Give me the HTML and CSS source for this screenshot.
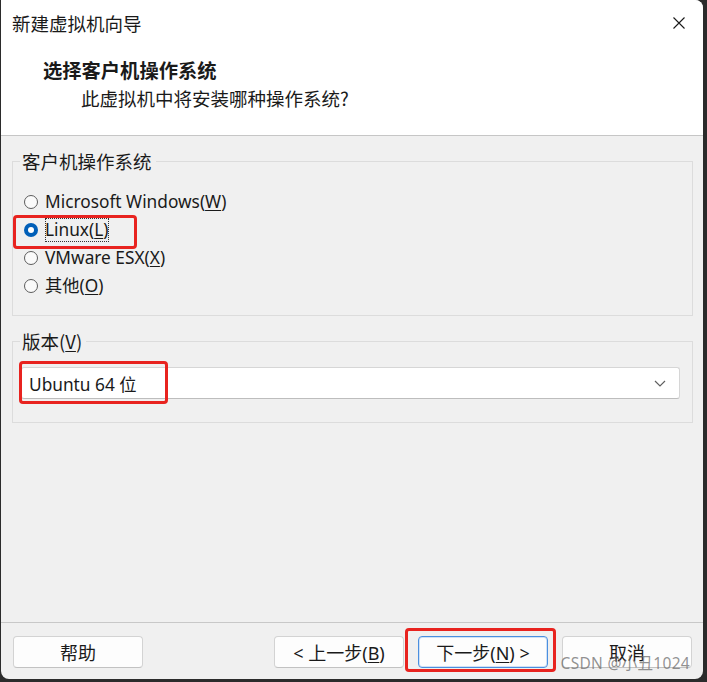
FILE: index.html
```html
<!DOCTYPE html>
<html lang="zh-CN">
<head>
<meta charset="utf-8">
<title>新建虚拟机向导</title>
<link rel="stylesheet" href="styles.css">
</head>
<body>
<div class="window">
  <header class="header">
    <div class="titlebar">
      <span class="title">新建虚拟机向导</span>
      <span class="close" aria-label="关闭">
        <svg width="14" height="14" viewBox="0 0 14 14"><path d="M1.5 1.5 L12.5 12.5 M12.5 1.5 L1.5 12.5" stroke="#1a1a1a" stroke-width="1.1" fill="none"/></svg>
      </span>
    </div>
    <div class="heading">选择客户机操作系统</div>
    <div class="subheading">此虚拟机中将安装哪种操作系统?</div>
  </header>

  <main class="main">
    <fieldset class="group group-os">
      <legend class="legend">客户机操作系统</legend>
      <div class="group-body os-body">
        <div class="radio-row"><span class="radio"></span><span class="label">Microsoft Windows(<u>W</u>)</span></div>
        <div class="radio-row annotated"><span class="radio checked"></span><span class="label focus">Linux(<u>L</u>)</span></div>
        <div class="radio-row"><span class="radio"></span><span class="label">VMware ESX(<u>X</u>)</span></div>
        <div class="radio-row"><span class="radio"></span><span class="label">其他(<u>O</u>)</span></div>
      </div>
    </fieldset>

    <fieldset class="group group-ver">
      <legend class="legend">版本(<u>V</u>)</legend>
      <div class="group-body ver-body">
        <div class="select">
          <span class="select-value annotated-select">Ubuntu 64 位</span>
          <svg class="chevron" width="12" height="7" viewBox="0 0 12 7"><path d="M1 1 L6 6 L11 1" stroke="#606060" stroke-width="1.2" fill="none"/></svg>
        </div>
      </div>
    </fieldset>
  </main>

  <footer class="footer">
    <button class="btn">帮助</button>
    <div class="footer-right">
      <button class="btn">&lt; 上一步(<u>B</u>)</button>
      <button class="btn primary annotated-btn">下一步(<u>N</u>) &gt;</button>
      <button class="btn">取消</button>
    </div>
    <span class="watermark">CSDN @小丑1024</span>
  </footer>
</div>
</body>
</html>
```

FILE: styles.css
```css
*, *::before, *::after { box-sizing: border-box; }

html, body {
  margin: 0;
  padding: 0;
  background: #2b2b2b;
  width: 707px;
  height: 682px;
  overflow: hidden;
}

body {
  font-family: "Noto Sans", "Noto Sans CJK SC", sans-serif;
  font-size: 17px;
  color: #1a1a1a;
}

.window {
  margin: 0 4px 0 1px;
  width: 702px;
  height: 679px;
  background: #f0f0f0;
  border-radius: 0 8px 8px 8px;
  overflow: hidden;
  display: flex;
  flex-direction: column;
  position: relative;
}

u { text-decoration: underline; text-underline-offset: 2px; }

/* header */
.header {
  background: #ffffff;
  height: 136px;
  border-bottom: 1px solid #c6c6c6;
  flex: none;
}

.titlebar {
  height: 46px;
  display: flex;
  align-items: center;
  justify-content: space-between;
  padding: 0 17px 0 11px;
}

.title {
  font-family: "Noto Sans CJK SC", sans-serif;
  font-size: 18.5px;
  color: #1a1a1a;
}

.close { display: flex; }

.heading {
  margin-top: 10px;
  padding-left: 42px;
  font-family: "Noto Sans CJK SC", sans-serif;
  font-weight: 700;
  font-size: 19.3px;
  line-height: 28px;
}

.subheading {
  padding-left: 80px;
  font-family: "Noto Sans CJK SC", sans-serif;
  font-size: 18.5px;
  line-height: 28px;
}

/* main */
.main {
  flex: 1;
  padding: 13px 10px 0 11px;
}

.group {
  margin: 0;
  border: 1px solid #dcdcdc;
  padding: 0;
  min-width: 0;
}

.legend {
  padding: 0 4px 0 2px;
  margin-left: 7px;
  font-family: "Noto Sans CJK SC", sans-serif;
  font-size: 18.5px;
  line-height: 24px;
  color: #1a1a1a;
}

.group-os {
  padding: 15px 0 15px 0;
}

.os-body {
  padding: 0 10px 0 11px;
}

.radio-row {
  height: 28px;
  display: flex;
  align-items: center;
  gap: 7px;
  position: relative;
}

.radio {
  width: 14px;
  height: 14px;
  border-radius: 50%;
  border: 1px solid #5c5c5c;
  background: #fafafa;
  flex: none;
  display: flex;
  align-items: center;
  justify-content: center;
}

.radio.checked {
  border: none;
  background: #005fb8;
}

.radio.checked::after {
  content: "";
  width: 6px;
  height: 6px;
  border-radius: 50%;
  background: #ffffff;
}

.label {
  line-height: 24px;
  white-space: nowrap;
  font-size: 17.3px;
}

.label.focus {
  outline: 1px dotted #333;
  outline-offset: -1px;
  padding: 0 1px 0 0;
}

.annotated::after {
  content: "";
  position: absolute;
  left: -11px;
  top: -1px;
  width: 124px;
  height: 34px;
  border: 3px solid #e8231f;
  border-radius: 4px;
}

.group-ver {
  margin-top: 13px;
  padding: 14px 0 23px 0;
}

.ver-body {
  padding: 0 12px 0 8px;
}

.select {
  height: 32px;
  background: #ffffff;
  border: 1px solid #d6d6d6;
  border-bottom-color: #bdbdbd;
  border-radius: 3px;
  display: flex;
  align-items: center;
  justify-content: space-between;
  padding: 0 13px 0 7px;
  position: relative;
}

.select-value {
  white-space: nowrap;
  font-size: 17.3px;
}

.annotated-select::after {
  content: "";
  position: absolute;
  left: -3px;
  top: -7px;
  width: 149px;
  height: 43px;
  border: 3px solid #e8231f;
  border-radius: 4px;
}

/* footer */
.footer {
  flex: none;
  border-top: 1px solid #c8c8c8;
  padding: 13px 11px 11px 12px;
  display: flex;
  justify-content: space-between;
  position: relative;
}

.footer-right {
  display: flex;
  gap: 14px;
}

.btn {
  width: 130px;
  height: 32px;
  background: #fdfdfd;
  border: 1px solid #d3d3d3;
  border-bottom-color: #c2c2c2;
  border-radius: 4px;
  font-family: "Noto Sans", "Noto Sans CJK SC", sans-serif;
  font-size: 18px;
  color: #1a1a1a;
  padding: 0;
  position: relative;
}

.btn.primary {
  border: 1px solid #4a8fe0;
  box-shadow: inset 0 0 0 1px rgba(74, 143, 224, 0.25);
}

.annotated-btn::after {
  content: "";
  position: absolute;
  left: -14px;
  top: -9px;
  width: 151px;
  height: 44px;
  border: 3px solid #e8231f;
  border-radius: 4px;
}

.watermark {
  position: absolute;
  right: 13px;
  bottom: 5px;
  font-family: "Noto Sans", "Noto Sans CJK SC", sans-serif;
  font-size: 15.5px;
  color: rgba(110, 110, 110, 0.75);
  letter-spacing: 0.3px;
  white-space: nowrap;
}
```
